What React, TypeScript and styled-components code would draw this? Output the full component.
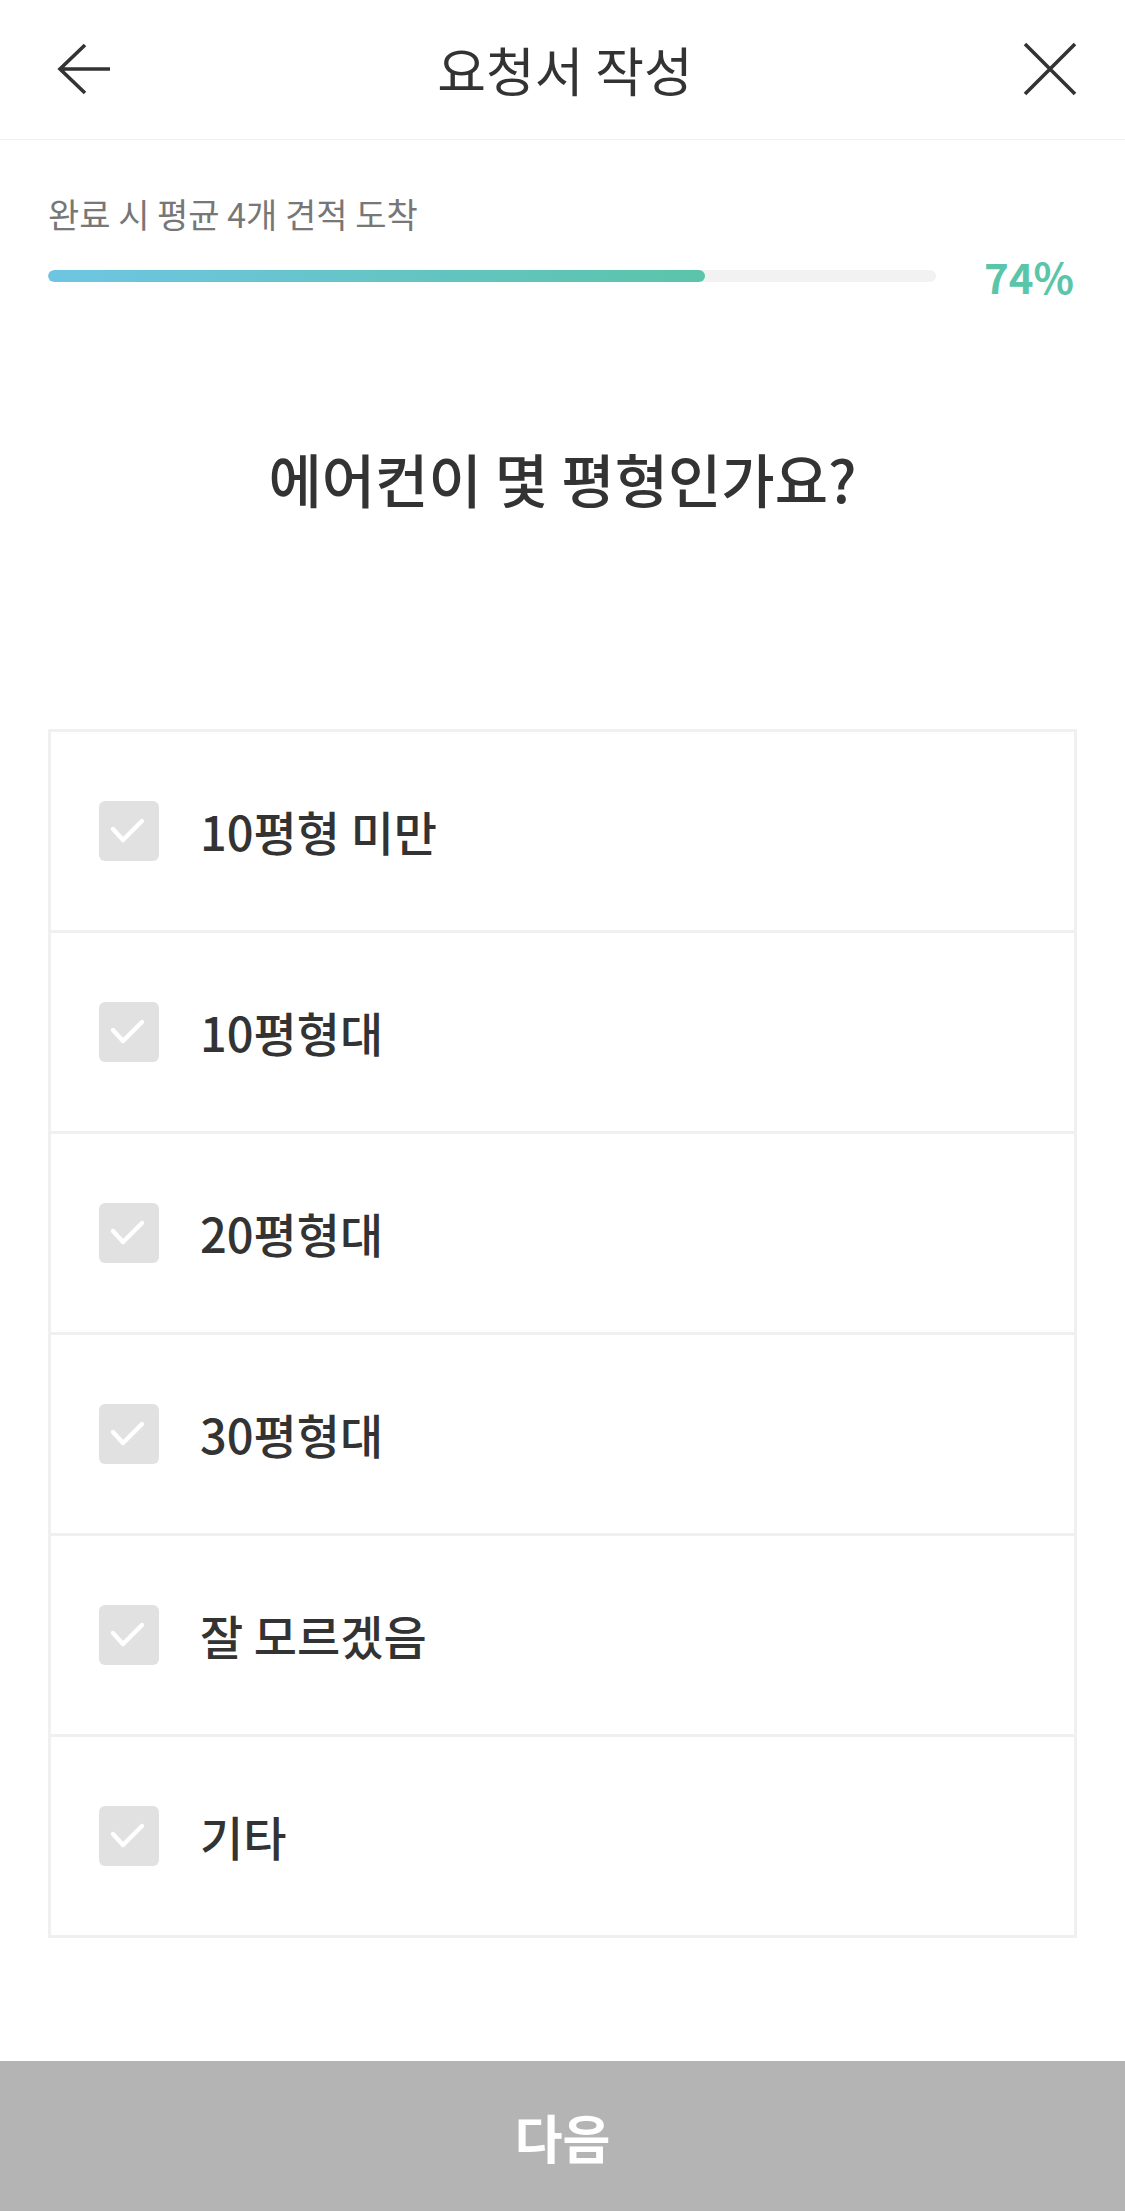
import React from "react";
import styled, { createGlobalStyle } from "styled-components";

const GlobalStyle = createGlobalStyle`
  * { box-sizing: border-box; }
  html, body { margin: 0; padding: 0; background: #ffffff; }
  body {
    font-family: "Noto Sans CJK KR", "Noto Sans", sans-serif;
    color: #333333;
  }
`;

const Page = styled.div`
  min-height: 100vh;
  display: flex;
  flex-direction: column;
  background: #ffffff;
`;

const Header = styled.header`
  height: 140px;
  display: flex;
  align-items: center;
  justify-content: space-between;
  padding: 0 45px 1px 50px;
  border-bottom: 1px solid #f0f0f0;
`;

const IconButton = styled.button`
  width: 60px;
  height: 60px;
  padding: 0;
  border: none;
  background: transparent;
  display: flex;
  align-items: center;
  justify-content: center;
  color: #333333;
  cursor: pointer;
`;

const Title = styled.h1`
  margin: 0;
  font-size: 53px;
  font-weight: 400;
  line-height: 60px;
  color: #333333;
`;

const ProgressSection = styled.section`
  padding: 51px 51px 0 48px;
`;

const ProgressLabel = styled.div`
  font-size: 34px;
  line-height: 46px;
  color: #777777;
`;

const ProgressRow = styled.div`
  margin-top: 16px;
  display: flex;
  align-items: center;
  height: 46px;
`;

const Track = styled.div`
  flex: 1;
  height: 12px;
  border-radius: 6px;
  background: #f2f2f2;
  overflow: hidden;
`;

const Fill = styled.div`
  height: 100%;
  border-radius: 6px;
  background: linear-gradient(90deg, #6ec5e2 0%, #5bc4aa 100%);
`;

const Percent = styled.div`
  width: 138px;
  text-align: right;
  font-size: 42px;
  font-weight: 700;
  line-height: 46px;
  color: #5bc5aa;
`;

const Question = styled.h2`
  margin: 139px 0 0;
  text-align: center;
  font-size: 58px;
  font-weight: 500;
  line-height: 80px;
  color: #333333;
`;

const OptionList = styled.ul`
  list-style: none;
  margin: 211px 48px 0 48px;
  padding: 0;
  border: 3px solid #f0f0f0;
  border-bottom: none;
`;

const OptionRow = styled.li`
  height: 201px;
  display: flex;
  align-items: center;
  padding: 0 0 0 48px;
  border-bottom: 3px solid #f0f0f0;
  cursor: pointer;
`;

const CheckBox = styled.span<{ $checked?: boolean }>`
  width: 60px;
  height: 60px;
  flex: none;
  border-radius: 6px;
  background: ${(p) => (p.$checked ? "#5bc5aa" : "#e1e1e1")};
  display: flex;
  align-items: center;
  justify-content: center;
`;

const OptionText = styled.span`
  margin-left: 41px;
  font-size: 47px;
  font-weight: 500;
  line-height: 60px;
  color: #333333;
`;

const Spacer = styled.div`
  flex: 1;
  min-height: 40px;
`;

const NextButton = styled.button`
  height: 150px;
  width: 100%;
  border: none;
  background: #b4b4b4;
  color: #ffffff;
  font-family: "Noto Sans CJK KR", "Noto Sans", sans-serif;
  font-size: 52px;
  font-weight: 700;
  display: flex;
  align-items: center;
  justify-content: center;
`;

const BackIcon = () => (
  <svg width="60" height="60" viewBox="0 0 60 60" fill="none">
    <path
      d="M10 30 H60 M35 6 L10 30 L35 54"
      stroke="#333333"
      strokeWidth="3.6"
      strokeLinecap="butt"
      strokeLinejoin="miter"
    />
  </svg>
);

const CloseIcon = () => (
  <svg width="60" height="60" viewBox="0 0 60 60" fill="none">
    <path d="M5 5 L55 55 M55 5 L5 55" stroke="#333333" strokeWidth="3.6" />
  </svg>
);

const CheckIcon = () => (
  <svg width="60" height="60" viewBox="0 0 60 60" fill="none">
    <path
      d="M14 28 L24 39 L43 20"
      stroke="#ffffff"
      strokeWidth="4.4"
      strokeLinecap="round"
      strokeLinejoin="round"
    />
  </svg>
);

const options = ["10평형 미만", "10평형대", "20평형대", "30평형대", "잘 모르겠음", "기타"];

export default function App() {
  const progress = 74;
  return (
    <>
      <GlobalStyle />
      <Page>
        <Header>
          <IconButton aria-label="뒤로">
            <BackIcon />
          </IconButton>
          <Title>요청서 작성</Title>
          <IconButton aria-label="닫기">
            <CloseIcon />
          </IconButton>
        </Header>
        <ProgressSection>
          <ProgressLabel>완료 시 평균 4개 견적 도착</ProgressLabel>
          <ProgressRow>
            <Track>
              <Fill style={{ width: `${progress}%` }} />
            </Track>
            <Percent>{progress}%</Percent>
          </ProgressRow>
        </ProgressSection>
        <Question>에어컨이 몇 평형인가요?</Question>
        <OptionList>
          {options.map((o) => (
            <OptionRow key={o}>
              <CheckBox>
                <CheckIcon />
              </CheckBox>
              <OptionText>{o}</OptionText>
            </OptionRow>
          ))}
        </OptionList>
        <Spacer />
        <NextButton>다음</NextButton>
      </Page>
    </>
  );
}
